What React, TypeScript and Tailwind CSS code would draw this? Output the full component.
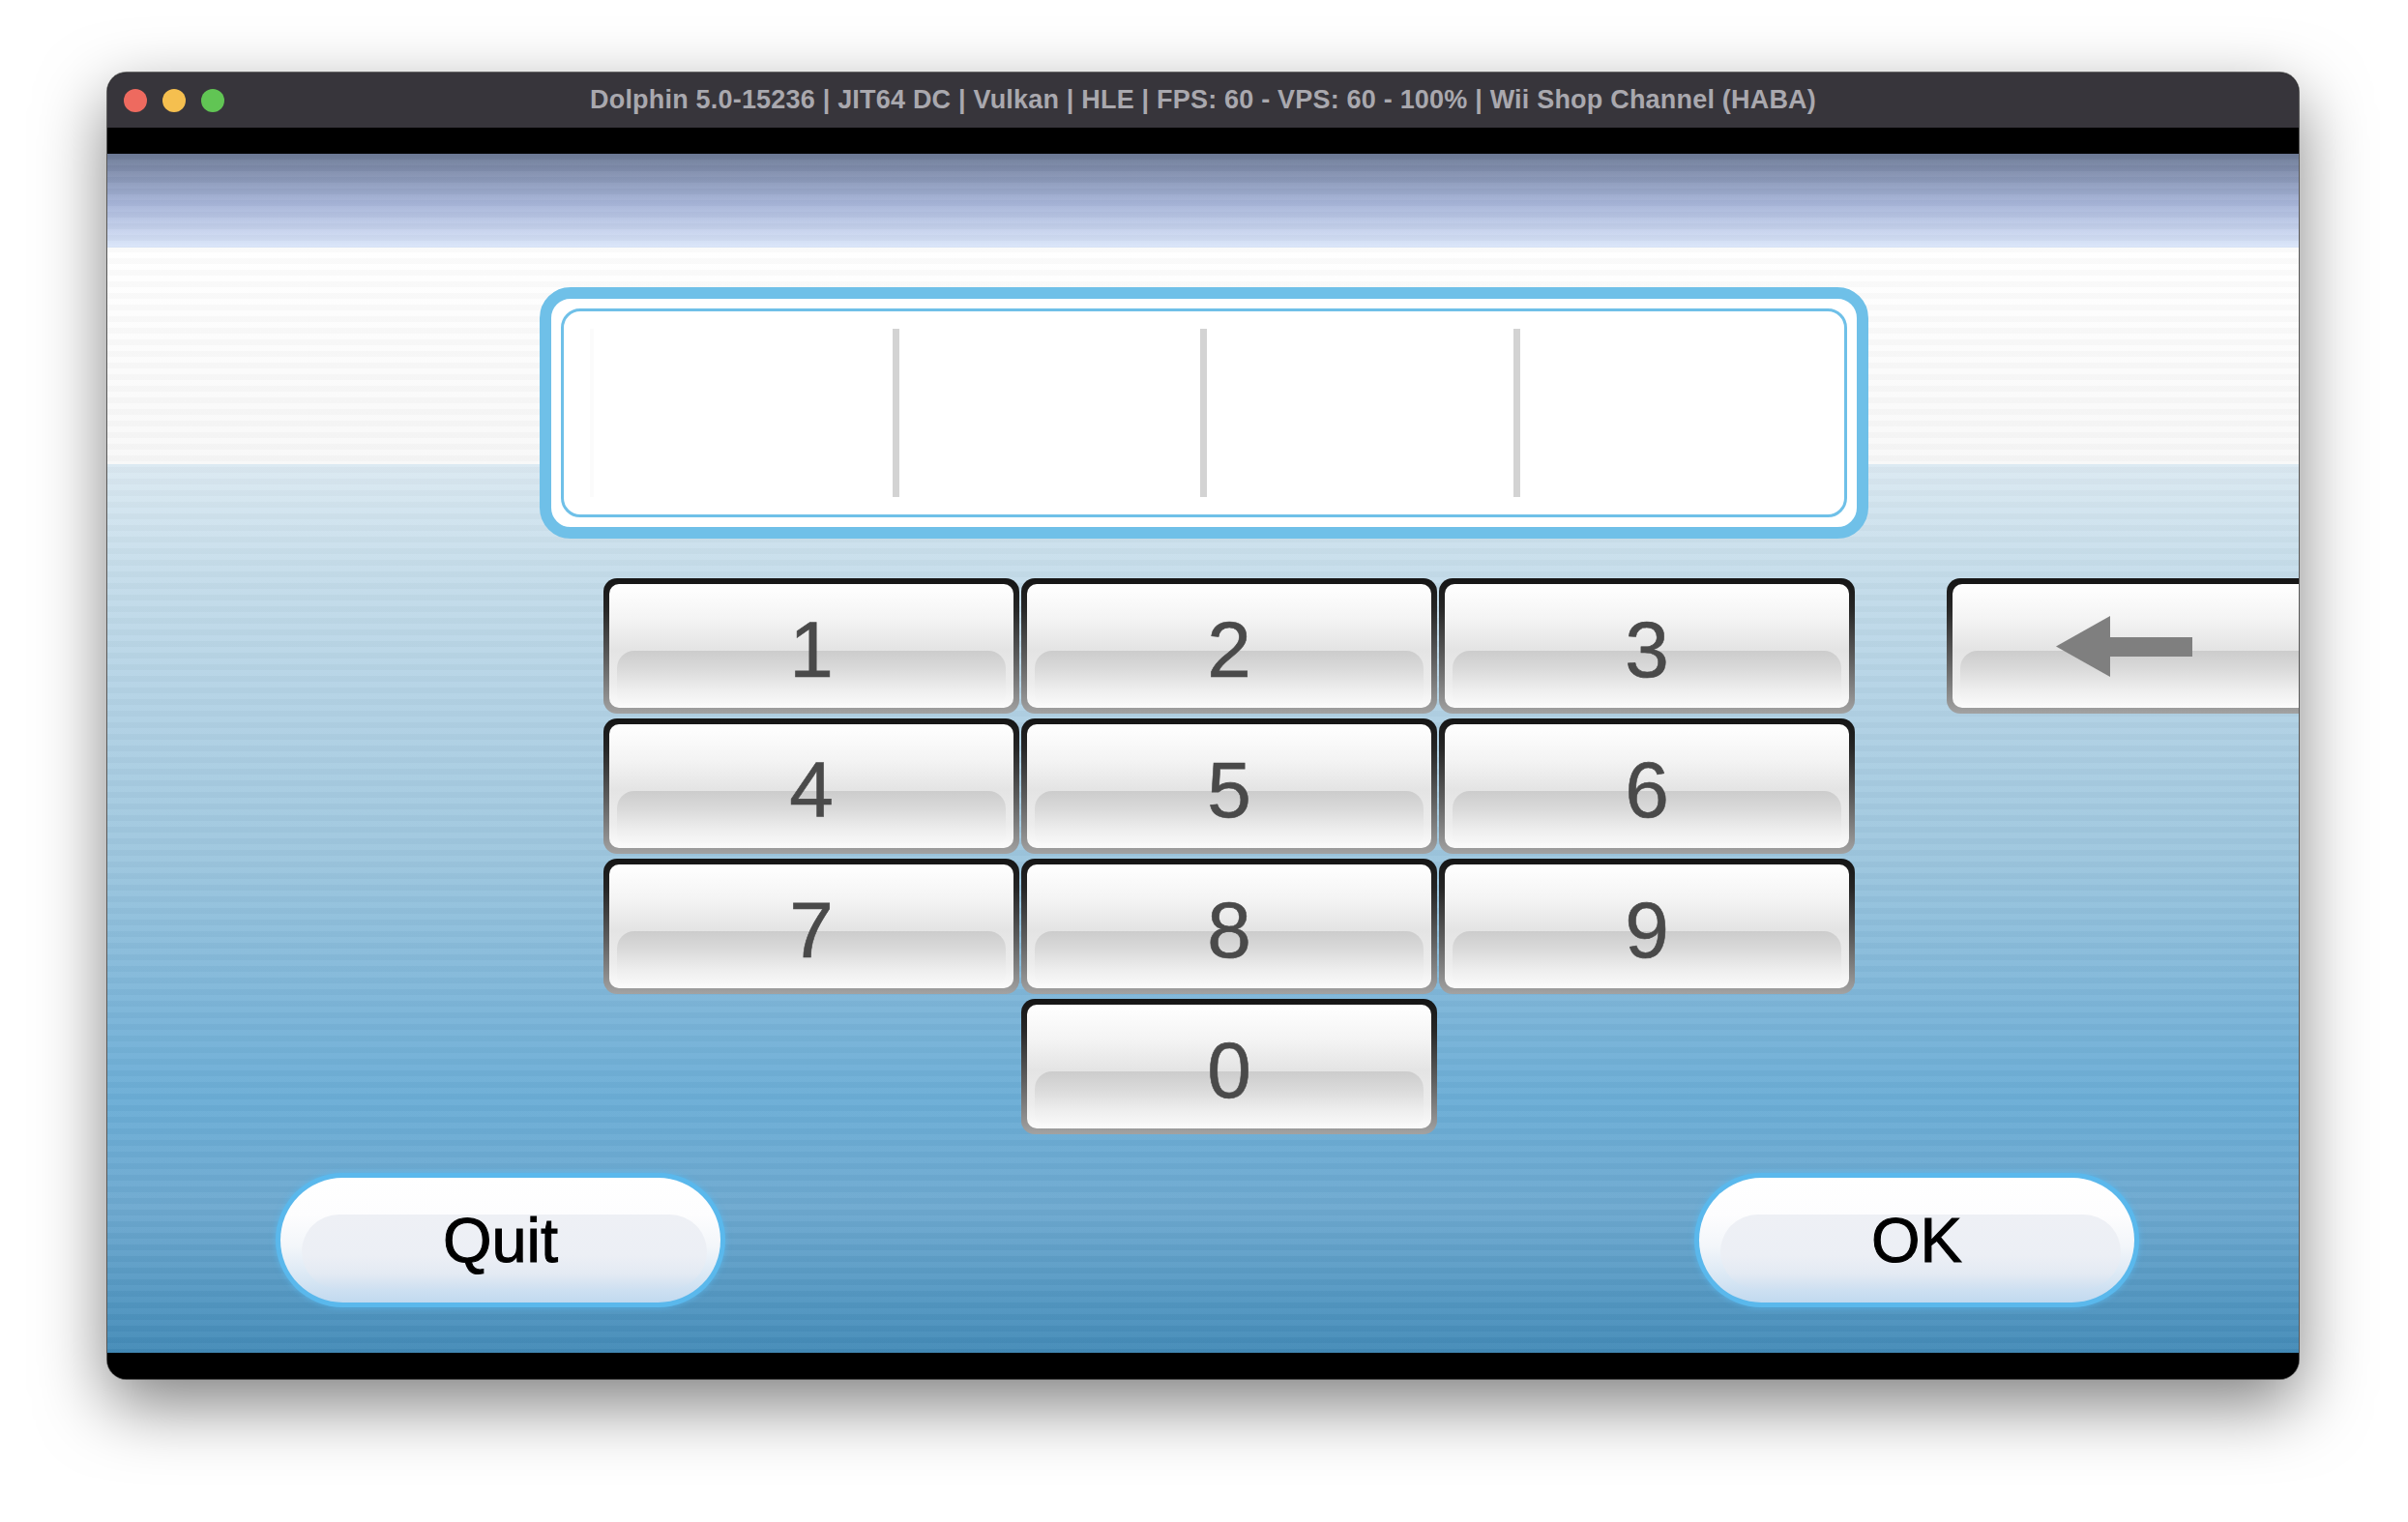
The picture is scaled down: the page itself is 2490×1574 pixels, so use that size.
import type { ReactNode } from "react";

const digitRows: Array<Array<string | null>> = [
  ["1", "2", "3"],
  ["4", "5", "6"],
  ["7", "8", "9"],
  [null, "0", null],
];

const sans = "font-['Liberation_Sans',Arial,sans-serif]";

function KeyButton({ children, className = "" }: { children?: ReactNode; className?: string }) {
  return (
    <div
      className={`h-[140px] w-[430px] shrink-0 rounded-[14px] bg-[linear-gradient(to_bottom,#151515_0%,#262626_22%,#5e5e5e_60%,#a2a2a2_100%)] p-[6px] ${className}`}
    >
      <div className="relative h-full w-full overflow-hidden rounded-[10px] bg-[linear-gradient(to_bottom,#ffffff_0%,#f4f4f4_28%,#e4e4e4_53%,#ececec_80%,#fbfbfb_100%)]">
        {/* lower glossy shelf */}
        <div className="absolute bottom-[5px] left-[8px] right-[8px] top-[54%] rounded-t-[18px] rounded-b-[8px] bg-[linear-gradient(to_bottom,#cccccc_0%,#dadada_35%,#eeeeee_75%,#f7f7f7_100%)]" />
        <div className="relative flex h-full w-full items-center">{children}</div>
      </div>
    </div>
  );
}

function Digit({ value }: { value: string }) {
  return (
    <KeyButton>
      <span className={`w-full pt-[8px] text-center text-[82px] leading-none text-[#4a4a4a] [-webkit-text-stroke:0.6px_#4a4a4a] ${sans}`}>
        {value}
      </span>
    </KeyButton>
  );
}

function PillButton({ label, className }: { label: string; className: string }) {
  return (
    <div className={`h-[139px] shrink-0 rounded-full bg-[#5ab8ec] p-[5px] shadow-[0_0_6px_rgba(90,184,236,0.8)] ${className}`}>
      <div className="relative h-full w-full overflow-hidden rounded-full bg-[linear-gradient(to_bottom,#ffffff_0%,#fdfdfe_30%,#f3f6fa_55%,#d9e7f4_80%,#c1d9ef_100%)]">
        <div className="absolute bottom-[14px] left-[22px] right-[14px] top-[38px] rounded-full bg-[linear-gradient(to_bottom,#eef0f5_0%,#eceff5_55%,#e3eaf3_80%,#cfe0f1_100%)]" />
        <div
          className={`relative flex h-full w-full items-center justify-center text-[65px] leading-none text-black [-webkit-text-stroke:1px_#000] ${sans}`}
        >
          {label}
        </div>
      </div>
    </div>
  );
}

function CodeField() {
  return (
    <div className="h-[260px] w-[1374px] rounded-[32px] border-[12px] border-[#6fc0e8] bg-white p-[10px]">
      <div className="flex h-full w-full items-center rounded-[20px] border-[3px] border-[#6fc0e8] bg-white">
        <div className="h-[174px] w-[340px] shrink-0 pl-[27px]">
          <div className="h-full w-[4px] bg-[#fbfbfb]" />
        </div>
        <div className="h-[174px] w-[7px] shrink-0 bg-[#d3d3d3]" />
        <div className="w-[311px] shrink-0" />
        <div className="h-[174px] w-[7px] shrink-0 bg-[#d3d3d3]" />
        <div className="w-[317px] shrink-0" />
        <div className="h-[174px] w-[7px] shrink-0 bg-[#d3d3d3]" />
      </div>
    </div>
  );
}

export default function App() {
  return (
    <div className="min-h-screen w-full bg-white pl-[111px] pt-[75px]">
      <div className="flex h-[1351px] w-[2266px] flex-col overflow-hidden rounded-[20px] bg-black shadow-[0_0_0_1px_rgba(0,0,0,0.55),0_26px_70px_rgba(0,0,0,0.5)]">
        {/* title bar */}
        <div className="grid h-[57px] shrink-0 grid-cols-[1fr_auto_1fr] items-center bg-[#37353b]">
          <div className="flex items-center gap-[16px] pl-[17px]">
            <span className="h-[24px] w-[24px] rounded-full bg-[#ee6a5f]" />
            <span className="h-[24px] w-[24px] rounded-full bg-[#f5bf4f]" />
            <span className="h-[24px] w-[24px] rounded-full bg-[#61c554]" />
          </div>
          <div className={`text-[27px] font-bold tracking-[0.2px] text-[#a9a8ae] ${sans}`}>
            Dolphin 5.0-15236 | JIT64 DC | Vulkan | HLE | FPS: 60 - VPS: 60 - 100% | Wii Shop Channel (HABA)
          </div>
          <div />
        </div>
        <div className="h-[27px] shrink-0 bg-black" />

        {/* game screen */}
        <div className="flex h-[1240px] shrink-0 flex-col overflow-hidden bg-[image:repeating-linear-gradient(to_bottom,rgba(0,0,0,0.02)_0px,rgba(0,0,0,0.02)_6px,rgba(255,255,255,0.03)_6px,rgba(255,255,255,0.03)_12px),linear-gradient(to_bottom,#6d7a96_0px,#a5b3d7_50px,#dbe6fa_97px,#ffffff_97px,#f8f8f8_321px,#dbe9f2_321px,#c4dcea_440px,#9dc6de_727px,#7ab4d8_893px,#6badd6_980px,#6ea9d0_1090px,#4f94bf_1200px,#438ab7_1240px)]">
          <div className="pl-[447px] pt-[138px]">
            <CodeField />
          </div>

          <div className="mt-[41px] flex items-start pl-[513px]">
            <div className="grid w-[1294px] shrink-0 grid-cols-3 gap-x-[2px] gap-y-[5px]">
              {digitRows.flat().map((value, i) =>
                value ? <Digit key={i} value={value} /> : <div key={i} />,
              )}
            </div>
            <KeyButton className="ml-[95px]">
              <svg className="ml-[107px]" width="141" height="63" viewBox="0 0 141 63" fill="#7f7f7f">
                <path d="M0 31.5 L56 0 L56 63 Z" />
                <rect x="55" y="22" width="86" height="20" />
              </svg>
            </KeyButton>
          </div>

          <div className="mt-[40px] flex items-center pl-[174px]">
            <PillButton label="Quit" className="w-[465px]" />
            <PillButton label="OK" className="ml-[1002px] w-[460px]" />
          </div>
        </div>

        <div className="h-[27px] shrink-0 bg-black" />
      </div>
    </div>
  );
}
